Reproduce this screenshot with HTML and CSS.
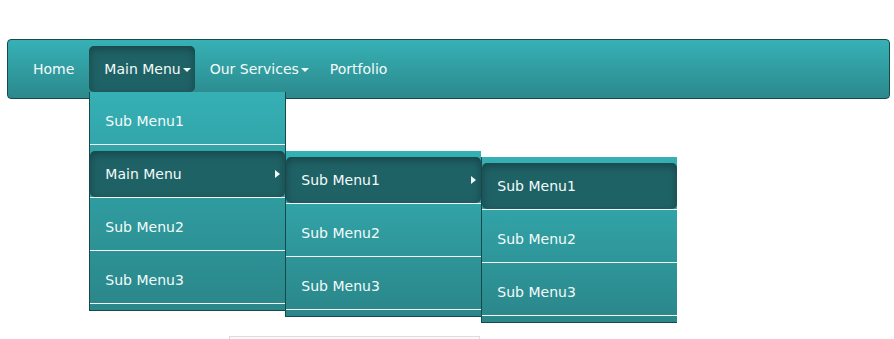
FILE: index.html
```html
<!DOCTYPE html>
<html lang="en">
<head>
<meta charset="utf-8">
<title>Menu</title>
<link rel="stylesheet" href="styles.css">
</head>
<body>
<nav class="navbar">
  <ul class="nav">
    <li class="nav-item"><a class="nav-link" href="#">Home</a></li>
    <li class="nav-item">
      <a class="nav-link toggle active" href="#">Main Menu<span class="caret"></span></a>
      <ul class="dropdown first">
        <li class="dd-item"><a class="dd-link" href="#">Sub Menu1</a></li>
        <li class="dd-item">
          <a class="dd-link active" href="#">Main Menu<span class="arrow"></span></a>
          <ul class="dropdown sub">
            <li class="dd-item">
              <a class="dd-link active" href="#">Sub Menu1<span class="arrow"></span></a>
              <ul class="dropdown sub">
                <li class="dd-item"><a class="dd-link active" href="#">Sub Menu1</a></li>
                <li class="dd-item"><a class="dd-link" href="#">Sub Menu2</a></li>
                <li class="dd-item"><a class="dd-link" href="#">Sub Menu3</a></li>
              </ul>
            </li>
            <li class="dd-item"><a class="dd-link" href="#">Sub Menu2</a></li>
            <li class="dd-item"><a class="dd-link" href="#">Sub Menu3</a></li>
          </ul>
        </li>
        <li class="dd-item"><a class="dd-link" href="#">Sub Menu2</a></li>
        <li class="dd-item"><a class="dd-link" href="#">Sub Menu3</a></li>
      </ul>
    </li>
    <li class="nav-item"><a class="nav-link toggle" href="#">Our Services<span class="caret"></span></a></li>
    <li class="nav-item"><a class="nav-link" href="#">Portfolio</a></li>
  </ul>
</nav>
<div class="content">
  <div class="field"></div>
</div>
</body>
</html>
```

FILE: styles.css
```css
html, body {
  margin: 0;
  padding: 0;
  background: #ffffff;
  font-family: "DejaVu Sans", Verdana, sans-serif;
  font-size: 14px;
}

.navbar {
  margin: 39px 4px 0 7px;
  height: 58px;
  border: 1px solid #17484b;
  border-radius: 4px;
  background: linear-gradient(to bottom, #37b1b6 0%, #2b898c 100%);
  box-sizing: content-box;
}

.nav {
  list-style: none;
  margin: 0;
  padding: 6px 0 0 10px;
  display: flex;
}

.nav-item {
  position: relative;
}

.nav-link {
  display: block;
  height: 46px;
  line-height: 46px;
  padding: 0 15px;
  color: #f4fbfb;
  text-decoration: none;
  white-space: nowrap;
}

.nav-link.toggle {
  padding-right: 6px;
}

.nav-link.active {
  padding-right: 4px;
  background: #1f6266;
  border-radius: 5px;
  box-shadow: inset 0 3px 8px rgba(0, 0, 0, 0.3);
}

.caret {
  display: inline-block;
  width: 0;
  height: 0;
  margin-left: 2px;
  border-top: 4px solid #f4fbfb;
  border-left: 4px solid transparent;
  border-right: 4px solid transparent;
  vertical-align: middle;
}

.dropdown {
  list-style: none;
  margin: 0;
  padding: 6px 0 0 0;
  position: absolute;
  box-sizing: border-box;
  width: 196px;
  background: linear-gradient(to bottom, #35b0b5 0%, #2a8689 100%);
  border-left: 1px solid #17484b;
  border-bottom: 1px solid #17484b;
  z-index: 5;
}

.dropdown.first {
  top: 100%;
  left: 0;
  width: 197px;
  border-right: 1px solid #17484b;
}

.dropdown.sub {
  top: 0;
  left: 100%;
}

.dd-item {
  position: relative;
  border-bottom: 1px solid #f2fafa;
  margin-bottom: 6px;
}

.dd-link {
  display: block;
  position: relative;
  height: 46px;
  line-height: 46px;
  padding: 0 15px;
  color: #f4fbfb;
  text-decoration: none;
  white-space: nowrap;
}

.dd-link.active {
  background: #1f6266;
  border-radius: 5px;
  box-shadow: inset 0 3px 8px rgba(0, 0, 0, 0.3);
}

.arrow {
  position: absolute;
  right: 5px;
  top: 19px;
  width: 0;
  height: 0;
  border-left: 5px solid #f4fbfb;
  border-top: 4px solid transparent;
  border-bottom: 4px solid transparent;
}

.content {
  padding: 237px 0 0 229px;
}

.field {
  width: 249px;
  height: 10px;
  border: 1px solid #dcdcdc;
  border-bottom: none;
  background: #fafafa;
}
```
